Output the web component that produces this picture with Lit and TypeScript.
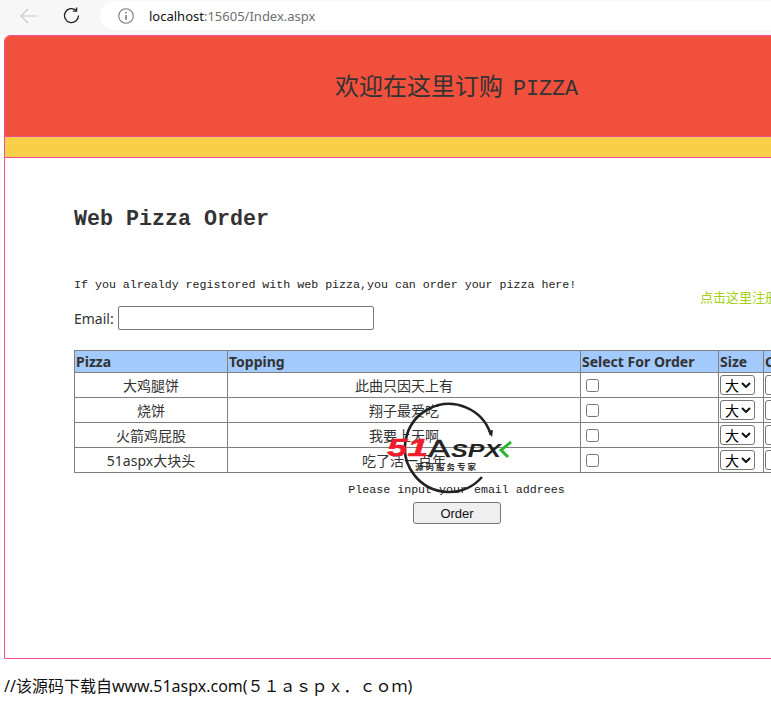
import { LitElement, html, css } from "lit";
import { customElement } from "lit/decorators.js";

const rows = [
  ["大鸡腿饼", "此曲只因天上有"],
  ["烧饼", "翔子最爱吃"],
  ["火箭鸡屁股", "我要上天啊"],
  ["51aspx大块头", "吃了活一百年"],
];

@customElement("app-root")
export class AppRoot extends LitElement {
  static styles = css`
    :host { display: block; width: 771px; height: 710px; overflow: hidden; position: relative; background: #fff; font-family: "Noto Sans", "Noto Sans CJK SC", sans-serif; font-size: 14px; color: #333; }
    .chrome { height: 35px; background: #f7f7f7; display: flex; align-items: flex-start; box-sizing: border-box; padding: 1px 0 0 20px; }
    .nav { width: 18px; height: 16px; margin-top: 7px; display: block; }
    .reload { width: 18px; height: 18px; margin: 6px 0 0 25px; display: block; }
    .pill { flex: 1; height: 29px; margin-left: 19px; background: #fff; border-radius: 15px 0 0 15px; display: flex; align-items: center; padding-left: 18px; gap: 15px; }
    .info { width: 16px; height: 16px; display: block; }
    .url { font: 13px "Noto Sans", sans-serif; color: #707070; }
    .url b { font-weight: 400; color: #111; }
    .page { width: 900px; height: 624px; margin-left: 4px; box-sizing: border-box; border: 1px solid #f0509a; border-radius: 6px 0 0 0; display: flex; flex-direction: column; overflow: hidden; }
    .banner { height: 100px; background: #f1503d; padding-left: 330px; line-height: 100px; font-family: "Noto Sans CJK SC", sans-serif; font-size: 24px; color: #333; flex: none; box-sizing: border-box; white-space: nowrap; }
    .banner .cn { line-height: 100px; position: relative; top: -1px; }
    .banner .en { font-family: "Liberation Mono", monospace; font-size: 21.7px; margin-left: 10px; position: relative; top: -1px; }
    .strip { height: 22px; background: #f9cf48; border-top: 1px solid #f0509a; border-bottom: 1px solid #f0509a; box-sizing: border-box; flex: none; }
    .content { position: relative; padding: 48px 0 0 69px; flex: 1; }
    h1 { margin: 0; font: bold 21.67px/28px "Liberation Mono", monospace; color: #333; }
    .intro { margin: 43px 0 0; font: 11.63px/16px "Liberation Mono", monospace; color: #222; }
    .reg { position: absolute; left: 695px; top: 129px; font-size: 13px; color: #a5cf18; white-space: nowrap; }
    .email { display: flex; align-items: center; gap: 4px; margin-top: 13px; height: 24px; font-size: 14px; }
    .email input { width: 256px; height: 24px; box-sizing: border-box; border: 1px solid #767676; border-radius: 2px; background: #fff; padding: 0; margin: 0; }
    table { margin-top: 20px; border-collapse: collapse; table-layout: fixed; width: 759px; }
    th, td { border: 1px solid #808080; padding: 0; height: 25px; box-sizing: border-box; }
    th { height: 22px; background: #a2cafc; text-align: left; font-size: 14px; font-weight: 700; padding-left: 1px; white-space: nowrap; line-height: 20px; }
    td { text-align: center; font-size: 14px; }
    td.left { text-align: left; padding-left: 1px; }
    .check { width: 13px; height: 13px; display: block; margin: 0 0 0 4px; box-sizing: border-box; border: 1px solid #767676; border-radius: 2.5px; background: #fff; }
    .sel { width: 35px; height: 20px; box-sizing: border-box; border: 1px solid #767676; border-radius: 3px; display: flex; align-items: center; gap: 2px; padding-left: 4px; font-size: 14px; color: #000; background: #fff; }
    .sel svg { width: 10px; height: 6px; display: block; }
    .hint { margin: 9px 0 0; font: 11.63px/16px "Liberation Mono", monospace; color: #222; width: 765px; text-align: center; }
    .order { display: block; margin: 4px 0 0 339px; width: 88px; height: 22px; box-sizing: border-box; border: 1px solid #767676; border-radius: 3px; background: #efefef; font: 13px "Liberation Sans", sans-serif; color: #111; padding: 0; }
    .foot { margin: 17px 0 0 4px; font: 16px/20px "Noto Sans", "Noto Sans CJK SC", sans-serif; color: #111; white-space: nowrap; }
    .mark { position: absolute; left: 385px; top: 402px; width: 128px; height: 100px; pointer-events: none; }
    .mark .t51 { font: italic 700 23px "Liberation Sans", sans-serif; fill: #f01c2c; stroke: #f01c2c; stroke-width: 0.5; }
    .mark .ta { font: 400 24px "Liberation Sans", sans-serif; fill: #222; stroke: #222; stroke-width: 0.5; }
    .mark .tspx { font: italic 700 18px "Liberation Sans", sans-serif; fill: #222; }
    .mark .tsub { font: 700 8.5px "Noto Sans CJK SC", sans-serif; fill: #333; letter-spacing: 2px; }
  `;

  render() {
    return html`
      <div class="chrome">
        <svg class="nav" viewBox="0 0 18 16" fill="none" stroke="#c9c9c9" stroke-width="1.2"><path d="M1 8h16M8 1L1 8l7 7"/></svg>
        <svg class="reload" viewBox="0 0 18 18" fill="none" stroke="#222" stroke-width="1.3"><path d="M15.5 8.5a7 7 0 1 1-2.4-5.2"/><path d="M13.6 0.6v3.6h-3.6" /></svg>
        <div class="pill">
          <svg class="info" viewBox="0 0 16 16" fill="none" stroke="#777" stroke-width="1.1"><circle cx="8" cy="8" r="7.3"/><path d="M8 7v5M8 4v1.6" stroke-width="1.5"/></svg>
          <span class="url"><b>localhost</b>:15605/Index.aspx</span>
        </div>
      </div>
      <div class="page">
        <div class="banner"><span class="cn">欢迎在这里订购</span><span class="en">PIZZA</span></div>
        <div class="strip"></div>
        <div class="content">
          <h1>Web Pizza Order</h1>
          <p class="intro">If you alrealdy registored with web pizza,you can order your pizza here!</p>
          <div class="reg">点击这里注册</div>
          <div class="email"><label>Email:</label><input type="text" /></div>
          <table>
            <colgroup><col style="width:153px" /><col style="width:353px" /><col style="width:138px" /><col style="width:45px" /><col style="width:70px" /></colgroup>
            <tr><th>Pizza</th><th>Topping</th><th>Select For Order</th><th>Size</th><th>Count</th></tr>
            ${rows.map(r => html`<tr>
              <td>${r[0]}</td><td>${r[1]}</td>
              <td class="left"><span class="check"></span></td>
              <td class="left"><div class="sel">大<svg viewBox="0 0 10 6" fill="none" stroke="#111" stroke-width="2"><path d="M1 1l4 4 4-4"/></svg></div></td>
              <td class="left"><div class="sel">1</div></td>
            </tr>`)}
          </table>
          <p class="hint">Please input your email addrees</p>
          <button class="order">Order</button>
        </div>
      </div>
      <div class="foot">//该源码下载自www.51aspx.com(５１ａｓｐｘ．ｃｏｍ)</div>
      <svg class="mark" viewBox="0 0 128 100">
        <path d="M97 75A44 44 0 1 1 106 33" fill="none" stroke="#222" stroke-width="2.6"/>
        <path d="M103 29l5-1-1 7z" fill="#222"/>
        <text class="t51" x="2" y="54" textLength="41" lengthAdjust="spacingAndGlyphs">51</text>
        <text class="ta" x="43" y="55" textLength="22" lengthAdjust="spacingAndGlyphs">A</text>
        <text class="tspx" x="66" y="55" textLength="50" lengthAdjust="spacingAndGlyphs">SPX</text>
        <path d="M126 40l-10 8 7 7" fill="none" stroke="#2bb52b" stroke-width="3"/>
        <text class="tsub" x="30" y="68">源码服务专家</text>
      </svg>
    `;
  }
}
